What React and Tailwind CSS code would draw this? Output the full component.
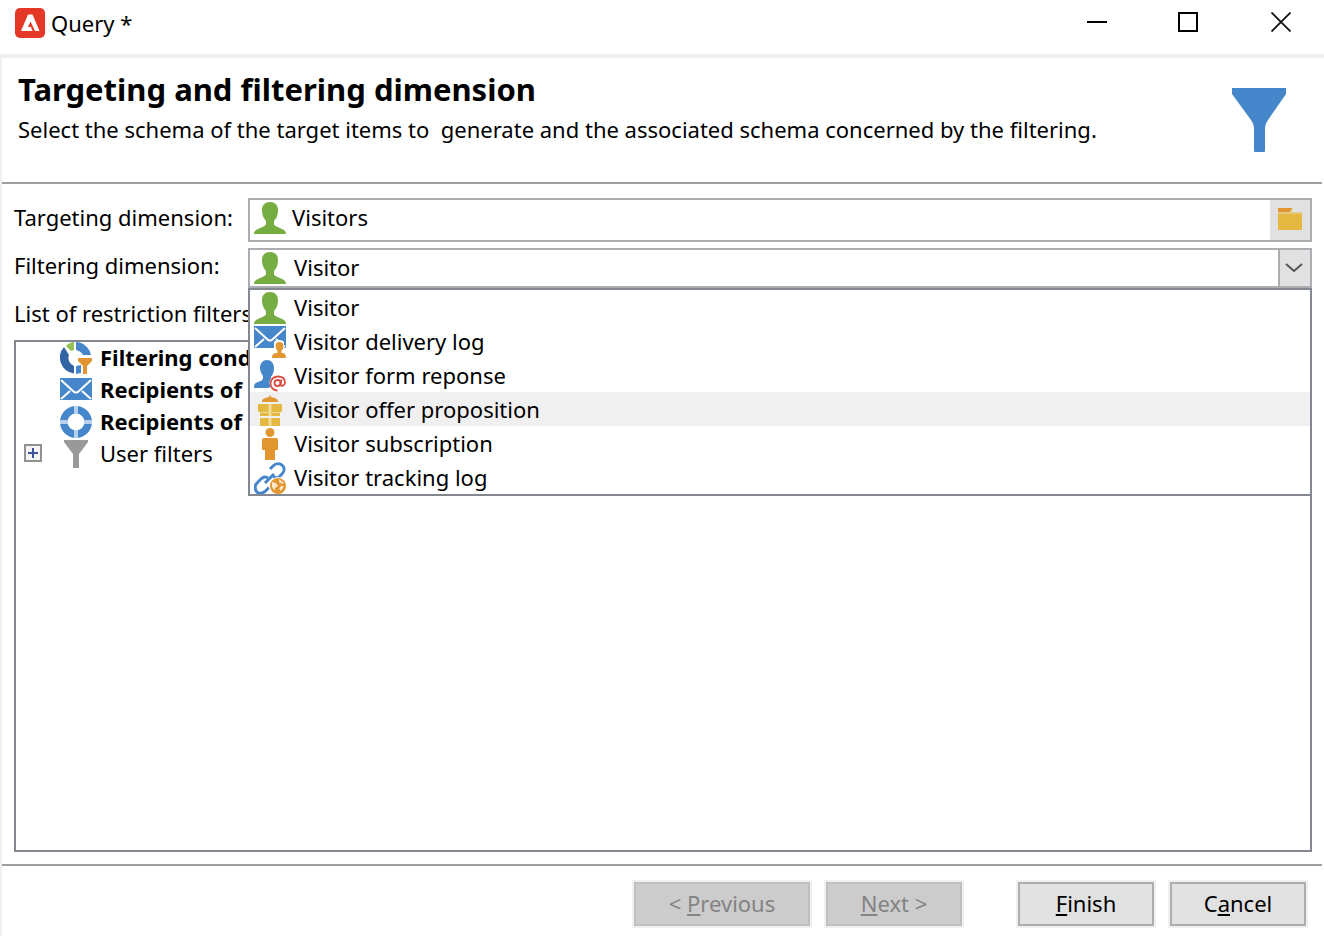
import React, { useState } from "react";

const PERSON = "M16 0c5 0 8 3 8 8 0 4-1 8-4 11v3c0 2 4 3 8 5 3 1 4 3 4 5H0c0-2 1-4 4-5 4-2 8-3 8-5v-3C9 16 8 12 8 8c0-5 3-8 8-8z";

function PersonIcon() {
  return (
    <svg className="size-8 shrink-0" viewBox="0 0 32 32" aria-hidden="true">
      <path d={PERSON} fill="#76ad42" />
    </svg>
  );
}

function EnvelopeShape() {
  return (
    <>
      <path d="M0 0h32v22H0z" fill="#4687cb" />
      <path d="M1 2l12 11q3 3 6 0L31 2M1 21l9-8M31 21l-9-8" fill="none" stroke="#fff" strokeWidth="2" />
    </>
  );
}

function DeliveryIcon() {
  return (
    <svg className="size-8 shrink-0" viewBox="0 0 32 32" aria-hidden="true">
      <EnvelopeShape />
      <path d="M20 22v-6q1-2 5-2t5 2v6z" fill="#fff" />
      <path d="M25.500 16c3 0 4 2 4 4s-1 3-2 5v2c3 0 4.500 1 4.500 5H18c0-4 2-5 5.500-5v-2c-1-2-2-3-2-5s1-4 4-4z" fill="#e29632" />
    </svg>
  );
}

function FormIcon() {
  return (
    <svg className="size-8 shrink-0" viewBox="0 0 32 32" aria-hidden="true">
      <path d="M13 0c4 0 7 3 7 8 0 4-1 6-3 9v2l3 2-5 7H0c0-4 1-5 4-6 3-1 5-2 5-4v-2C7 13 6 11 6 8c0-5 3-8 7-8z" fill="#4687cb" />
      <circle cx="24" cy="23" r="8.500" fill="#fff" />
      <g fill="none" stroke="#dc4d41" strokeWidth="1.800">
        <circle cx="23.500" cy="23" r="3" />
        <path d="M27.500 19.500l-1 5c0 2 4 2 4.500-2 0-4-3-6-7-6-4.500 0-7.500 3-7.500 7s3 7 7 7" />
      </g>
    </svg>
  );
}

function GiftIcon() {
  return (
    <svg className="size-8 shrink-0" viewBox="0 0 32 32" aria-hidden="true">
      <path d="M8 8c0-3 2-4 4-4l1-1 1 1 2-3 2 3 1-1 1 1c2 0 4 1 4 4z" fill="#e29632" />
      <path d="M4 10h24v7q0 1-2 1v4H6v-4q-2 0-2-1zM6 24h20v8H6z" fill="#e5b941" />
      <path d="M14.500 10h3v12h-3zM14.500 24h3v8h-3zM6 18h8v1H6zM18 18h8v1h-8z" fill="#efdc9a" />
    </svg>
  );
}

function StandingIcon() {
  return (
    <svg className="size-8 shrink-0" viewBox="0 0 32 32" aria-hidden="true">
      <circle cx="16" cy="4.500" r="4.500" fill="#e29632" />
      <path d="M10 10h12q2 0 2 2v10h-3v10H11V22H8V12q0-2 2-2z" fill="#e29632" />
    </svg>
  );
}

function LinkIcon() {
  return (
    <svg className="size-8 shrink-0" viewBox="0 0 32 32" aria-hidden="true">
      <g fill="none" stroke="#4687cb" strokeWidth="3">
        <path d="M16 7l3-3c3-3 7-3 9.500-.500s2 6-.500 8.500l-2 2c-2 2-5 2-7 0" />
        <path d="M14 16c-3-2-5-1-7 1l-4 4c-3 3-2 6-.500 8.500s6 2 8.500 0l4-4" />
        <path d="M11 21l9-9" />
      </g>
      <circle cx="24" cy="24" r="9" fill="#fff" />
      <circle cx="24" cy="24" r="8" fill="#e29632" />
      <path d="M18 20l4 1 2 3-3 2v3l-3-4zM25 17l5 4-2 1-3-2zM27 24h3l-3 5-2-2z" fill="#fbe7c8" />
    </svg>
  );
}

function ConditionIcon() {
  return (
    <svg className="size-8 shrink-0" viewBox="0 0 32 32" aria-hidden="true">
      <path d="M4 5A16 16 0 0 0 14 31.500V24A8.500 8.500 0 0 1 9 13z" fill="#3265a5" />
      <path d="M6 4Q10 0 14 0V8L11 9z" fill="#95c253" />
      <path d="M16 0A16 16 0 0 1 31 13H23Q21 9 16 8zM16 24l5-1v8l-5 1z" fill="#4687cb" />
      <path d="M18 16h14v3l-5 5v8h-4v-8l-5-5z" fill="#e29632" />
    </svg>
  );
}

function MailIcon() {
  return (
    <svg className="size-8 shrink-0" viewBox="0 -4 32 32" aria-hidden="true">
      <EnvelopeShape />
    </svg>
  );
}

function RingIcon() {
  return (
    <svg className="size-8 shrink-0" viewBox="0 0 32 32" aria-hidden="true">
      <circle cx="16" cy="16" r="12.250" fill="none" stroke="#4687cb" strokeWidth="7.500" />
      <path d="M16 0v8M16 24v8M0 16h8M24 16h8" stroke="#b7d1ec" strokeWidth="4" />
    </svg>
  );
}

function GreyFunnelIcon() {
  return (
    <svg className="size-8 shrink-0" viewBox="0 0 32 32" aria-hidden="true">
      <path d="M4 2h24v2l-9 12v14h-6V16L4 4z" fill="#999" />
    </svg>
  );
}

const DIMENSIONS = [
  { label: "Visitor", Icon: PersonIcon },
  { label: "Visitor delivery log", Icon: DeliveryIcon },
  { label: "Visitor form reponse", Icon: FormIcon },
  { label: "Visitor offer proposition", Icon: GiftIcon },
  { label: "Visitor subscription", Icon: StandingIcon },
  { label: "Visitor tracking log", Icon: LinkIcon },
];

const FILTERS = [
  { label: "Filtering conditions", Icon: ConditionIcon, bold: true },
  { label: "Recipients of", Icon: MailIcon, bold: true },
  { label: "Recipients of", Icon: RingIcon, bold: true },
  { label: "User filters", Icon: GreyFunnelIcon, expandable: true },
];

function TitleBar() {
  return (
    <div className="flex h-[54px] items-start justify-between bg-white pt-2 pl-[15px]">
      <div className="flex items-center gap-1.5">
        <svg className="size-[30px]" viewBox="0 0 30 30" aria-hidden="true">
          <rect width="30" height="30" rx="5" fill="#e53726" />
          <path d="M13 6.500h4.500L24.500 23H20l-4.500-9.500-2.500 5.500h3l1.500 4H6z" fill="#fff" />
        </svg>
        <span>Query *</span>
      </div>
      <div className="flex">
        <button type="button" aria-label="Minimize" className="flex h-7 w-[82px] items-center justify-center">
          <svg className="size-5" viewBox="0 0 20 20"><path d="M0 10h20" stroke="#000" strokeWidth="2" /></svg>
        </button>
        <button type="button" aria-label="Maximize" className="flex h-7 w-[100px] items-center justify-center">
          <svg className="size-5" viewBox="0 0 20 20"><path d="M1 1h18v18H1z" fill="none" stroke="#000" strokeWidth="2" /></svg>
        </button>
        <button type="button" aria-label="Close" className="flex h-7 w-[86px] items-center justify-center">
          <svg className="size-5" viewBox="0 0 20 20"><path d="M.500.500l19 19M19.500.500l-19 19" stroke="#111" strokeWidth="1.800" /></svg>
        </button>
      </div>
    </div>
  );
}

function WizardButton({ children, wide, disabled }) {
  return (
    <button
      type="button"
      disabled={disabled}
      className={
        "h-11 border-2 pb-0.5 outline-2 outline-[#f0f0f0] " +
        (wide ? "w-44 " : "w-34 ") +
        (disabled ? "border-[#bfbfbf] bg-[#ccc] text-[#838383]" : "border-[#adadad] bg-[#e1e1e1]")
      }
    >
      {children}
    </button>
  );
}

function Key({ children }) {
  return <span className="underline decoration-2 underline-offset-2">{children}</span>;
}

export default function App() {
  const [dimension, setDimension] = useState("Visitor");
  const [target, setTarget] = useState("Visitors");
  const SelectedIcon = DIMENSIONS.find((d) => d.label === dimension).Icon;

  return (
    <div className="flex min-h-screen flex-col bg-white font-['Noto_Sans','Open_Sans',sans-serif] text-[22px] leading-[30px] text-black">
      <TitleBar />
      <main className="flex grow flex-col border-t-4 border-l-2 border-[#f0f0f0]">
        <header className="mr-0.5 flex h-[126px] justify-between border-b-2 border-[#a0a0a0] pt-4 pr-[35px] pl-4">
          <div>
            <h1 className="text-[31px] leading-[30px] font-bold">Targeting and filtering dimension</h1>
            <p className="mt-2.5 whitespace-pre">Select the schema of the target items to  generate and the associated schema concerned by the filtering.</p>
          </div>
          <svg className="mt-3.5 h-16 w-[56px] shrink-0" viewBox="0 0 56 64" aria-hidden="true">
            <path d="M1 0h54v6L37 32q-3 4-3 8v23q0 1-1 1H24q-1 0-1-1V40q0-4-3-8L1 6z" fill="#4687cb" />
          </svg>
        </header>

        <div className="flex grow flex-col pt-3.5 pr-3 pb-3 pl-3">
          <div className="flex h-11">
            <label htmlFor="targeting" className="w-[234px] shrink-0 pt-1">Targeting dimension:</label>
            <div className="flex grow border-2 border-[#abadb3] pl-1">
              <div className="pt-0.5"><PersonIcon /></div>
              <input
                id="targeting"
                className="h-[34px] w-0 grow bg-transparent pl-1.5 outline-none"
                value={target}
                onChange={(e) => setTarget(e.target.value)}
              />
              <button type="button" aria-label="Browse" className="flex w-10 items-center justify-center bg-[#e1e1e1]">
                <svg className="size-6" viewBox="0 0 24 24" aria-hidden="true">
                  <path d="M0 0h14v4H0z" fill="#e29632" />
                  <path d="M0 4h24v18H0z" fill="#e5b941" />
                  <path d="M0 4h24v2H0zM12 2h2v2h-2z" fill="#e5c97f" />
                </svg>
              </button>
            </div>
          </div>

          <div className="mt-1.5 flex h-10">
            <label htmlFor="filtering" className="w-[234px] shrink-0 pt-0.5">Filtering dimension:</label>
            <div className="relative flex grow border-2 border-[#abadb3] pl-1">
              <div className="pt-0.5"><SelectedIcon /></div>
              <select
                id="filtering"
                className="w-0 grow appearance-none bg-transparent pb-0.5 pl-2 outline-none"
                value={dimension}
                onChange={(e) => setDimension(e.target.value)}
              >
                {DIMENSIONS.map((d) => (
                  <option key={d.label}>{d.label}</option>
                ))}
              </select>
              <span className="flex w-8 items-center justify-center border-l-2 border-[#adadad] bg-[#e1e1e1]">
                <svg className="size-5" viewBox="0 0 20 20" aria-hidden="true">
                  <path d="M1 6l8 7 8-7" fill="none" stroke="#555" strokeWidth="2" />
                </svg>
              </span>
              <ul role="listbox" aria-label="Filtering dimension" className="absolute top-full -right-0.5 -left-0.5 z-10 mt-0.5 border-2 border-[#828790] bg-white">
                {DIMENSIONS.map(({ label, Icon }) => (
                  <li
                    key={label}
                    role="option"
                    aria-selected={label === dimension}
                    onClick={() => setDimension(label)}
                    className={"flex h-[34px] items-end gap-2 pl-1 " + (label === "Visitor offer proposition" ? "bg-[#f0f0f0]" : "")}
                  >
                    <Icon />
                    <span className="self-center">{label}</span>
                  </li>
                ))}
              </ul>
            </div>
          </div>

          <p className="mt-2.5 h-[42px]">List of restriction filters</p>
          <ul className="grow border-2 border-[#828790]">
            {FILTERS.map(({ label, Icon, bold, expandable }, i) => (
              <li key={i} className="flex h-8 items-start pl-2">
                <span className="flex w-9 shrink-0 pt-1.5">
                  {expandable && (
                    <button type="button" aria-label="Expand" className="flex size-[18px] items-center justify-center border-2 border-[#919191] bg-[#f4f4f4]">
                      <svg className="size-3" viewBox="0 0 12 12"><path d="M1 6h10M6 1v10" stroke="#3a5299" strokeWidth="2" /></svg>
                    </button>
                  )}
                </span>
                <Icon />
                <span className={"pl-2 " + (bold ? "font-bold" : "")}>{label}</span>
              </li>
            ))}
          </ul>
        </div>

        <footer className="mr-0.5 flex h-[72px] justify-end gap-4 border-t-2 border-[#a0a0a0] pt-4 pr-4">
          <WizardButton wide disabled>&lt; <Key>P</Key>revious</WizardButton>
          <WizardButton disabled><Key>N</Key>ext &gt;</WizardButton>
          <span className="w-6" />
          <WizardButton><Key>F</Key>inish</WizardButton>
          <WizardButton>C<Key>a</Key>ncel</WizardButton>
        </footer>
      </main>
    </div>
  );
}
